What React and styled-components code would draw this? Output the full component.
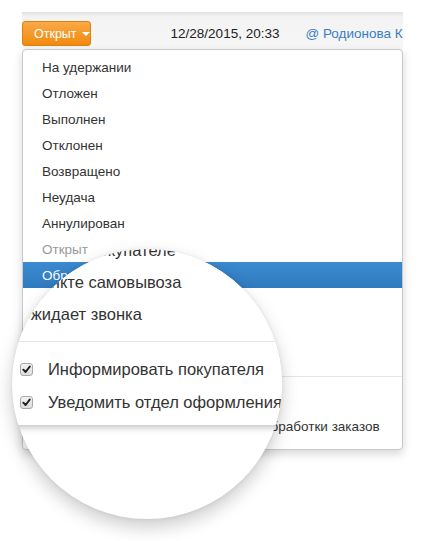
import React from "react";
import styled, { createGlobalStyle } from "styled-components";

const GlobalStyle = createGlobalStyle`
  html, body {
    margin: 0;
    padding: 0;
    background: #fff;
    font-family: "Liberation Sans", Arial, sans-serif;
  }
`;

const Page = styled.div`
  position: relative;
  width: 437px;
  height: 541px;
  overflow: hidden;
  padding: 12px 0 0 22px;
  box-sizing: border-box;
`;

const Frame = styled.div`
  width: 381px;
`;

const Header = styled.div`
  display: flex;
  align-items: center;
  height: 37px;
  padding-top: 6px;
  box-sizing: border-box;
  background: linear-gradient(#e2e2e2, #f3f3f3 5px, #f6f6f6);
  overflow: hidden;
  white-space: nowrap;
`;

const StatusButton = styled.button`
  display: flex;
  align-items: center;
  gap: 5px;
  width: 70px;
  height: 25px;
  padding: 0 0 0 11px;
  border: 1px solid #e07f0a;
  border-radius: 3px;
  background: linear-gradient(#f8a947, #f18a0f);
  color: #fff;
  font-family: inherit;
  font-size: 12.5px;
  box-sizing: border-box;
`;

const Caret = styled.span`
  width: 0;
  height: 0;
  border-left: 4px solid transparent;
  border-right: 4px solid transparent;
  border-top: 4px solid #fff;
`;

const DateText = styled.span`
  margin-left: 80px;
  font-size: 13.5px;
  color: #222;
`;

const UserLink = styled.a`
  margin-left: 26px;
  font-size: 13.5px;
  color: #3a7ec2;
  text-decoration: none;
`;

const Menu = styled.div`
  position: relative;
  background: #fff;
  border: 1px solid #c8c8c8;
  border-radius: 4px;
  padding: 4px 0 10px;
  box-shadow: 0 4px 10px rgba(0, 0, 0, 0.16);
  overflow: hidden;
`;

const Item = styled.div`
  display: flex;
  align-items: center;
  gap: ${(p) => p.$gap || 0}px;
  height: ${(p) => p.$h || 26}px;
  padding-left: ${(p) => p.$pad || 19}px;
  font-size: ${(p) => p.$size || 13.5}px;
  white-space: nowrap;
  color: ${(p) => (p.$muted ? "#999" : p.$active ? "#fff" : "#333")};
  background: ${(p) =>
    p.$active ? "linear-gradient(#3b8ad0, #2f7bbf)" : "transparent"};
`;

const Divider = styled.div`
  height: 1px;
  margin: ${(p) => p.$gap || 9}px 0;
  background: #e5e5e5;
`;

const Lens = styled.div`
  position: absolute;
  left: 12px;
  top: 249px;
  width: 270px;
  height: 270px;
  border-radius: 50%;
  background: #fff;
  overflow: hidden;
  box-shadow: 0 8px 18px rgba(0, 0, 0, 0.2), 0 0 4px rgba(0, 0, 0, 0.08);
`;

const LensPanel = styled.div`
  margin-top: -15px;
  width: 330px;
  padding-bottom: 6px;
  background: #fff;
  box-shadow: 0 3px 6px rgba(0, 0, 0, 0.22);
`;

const Box = styled.span`
  display: inline-flex;
  align-items: center;
  justify-content: center;
  width: ${(p) => p.$s}px;
  height: ${(p) => p.$s}px;
  border: 1px solid #a9a9a9;
  border-radius: 3px;
  background: linear-gradient(#f4f4f4, #dcdcdc);
  box-sizing: border-box;
  flex-shrink: 0;
`;

function Check({ size }) {
  return (
    <Box $s={size}>
      <svg width={size - 4} height={size - 4} viewBox="0 0 10 10">
        <path
          d="M1.5 5.2 L4 7.8 L8.6 1.8"
          fill="none"
          stroke="#222"
          strokeWidth="2.2"
          strokeLinecap="round"
          strokeLinejoin="round"
        />
      </svg>
    </Box>
  );
}

const statuses = [
  "На удержании",
  "Отложен",
  "Выполнен",
  "Отклонен",
  "Возвращено",
  "Неудача",
  "Аннулирован",
];

export default function App() {
  return (
    <Page>
      <GlobalStyle />
      <Frame>
        <Header>
          <StatusButton>
            Открыт <Caret />
          </StatusButton>
          <DateText>12/28/2015, 20:33</DateText>
          <UserLink href="#">@ Родионова Ксения</UserLink>
        </Header>
        <Menu>
          {statuses.map((s) => (
            <Item key={s}>{s}</Item>
          ))}
          <Item $muted>Открыт</Item>
          <Item $active>Обработан</Item>
          <Item>В пункте самовывоза</Item>
          <Item>Ожидает звонка</Item>
          <Item>Ожидает оплаты</Item>
          <Divider $gap={10} />
          <Item $gap={8}>
            <Check size={13} />
            Информировать покупателя
          </Item>
          <Item $gap={8}>
            <Check size={13} />
            Уведомить менеджеров отдела обработки заказов
          </Item>
        </Menu>
      </Frame>
      <Lens>
        <LensPanel>
          <Item $h={32} $pad={6} $size={16.5}>
            Передан покупателе
          </Item>
          <Item $h={32} $pad={6} $size={16.5}>
            В пункте самовывоза
          </Item>
          <Item $h={32} $pad={6} $size={16.5}>
            Ожидает звонка
          </Item>
          <Divider $gap={11} />
          <Item $h={33} $pad={8} $size={16.5} $gap={15}>
            <Check size={13} />
            Информировать покупателя
          </Item>
          <Item $h={33} $pad={8} $size={16.5} $gap={15}>
            <Check size={13} />
            Уведомить отдел оформления
          </Item>
        </LensPanel>
      </Lens>
    </Page>
  );
}
